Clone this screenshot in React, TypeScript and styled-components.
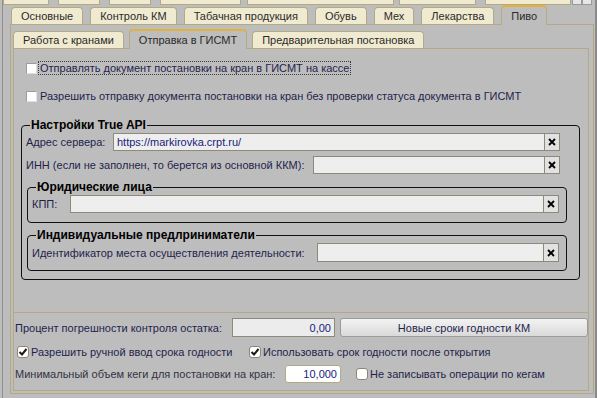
import React from "react";
import styled, { createGlobalStyle, css } from "styled-components";

const C = {
  bg: "#bdbdbd",
  cream: "#f0ead0",
  tan: "#b3aa84",
  accent: "#e3b23c",
  text: "#1f1f4c",
  value: "#1a1a7a",
  field: "#eeeeee",
  fieldBorder: "#8d897b",
};

const Global = createGlobalStyle`
  html, body { margin: 0; padding: 0; background: ${C.bg}; }
  body {
    font-family: "Liberation Sans", Arial, sans-serif;
    font-size: 11px;
    color: ${C.text};
  }
  * { box-sizing: border-box; }
`;

const Window = styled.div`
  width: 597px;
  height: 398px;
  overflow: hidden;
  background: ${C.bg};
  padding-left: 2px;
`;

const Frame = styled.div`
  height: 100%;
  border-left: 1px solid #8e8e8e;
  border-right: 2px solid #8a8a8a;
  display: flex;
  flex-direction: column;
`;

const StubStrip = styled.div`
  display: flex;
  height: 5px;
  flex-shrink: 0;
`;

const Stub = styled.div<{ $w: number; $gap: number; $light?: boolean }>`
  width: ${(p) => p.$w}px;
  margin-left: ${(p) => p.$gap}px;
  background: ${(p) => (p.$light ? "#e6e6e6" : C.cream)};
  border: 1px solid ${(p) => (p.$light ? "#9a9a9a" : C.tan)};
  border-top: none;
`;

const TabRow = styled.div<{ $indent: number; $gap: number }>`
  display: flex;
  align-items: flex-end;
  gap: ${(p) => p.$gap}px;
  height: 19px;
  flex-shrink: 0;
  margin-left: ${(p) => p.$indent}px;
`;

const Tab = styled.div<{ $active?: boolean }>`
  height: 17px;
  padding: 0 9px;
  display: flex;
  align-items: center;
  white-space: nowrap;
  color: #2a2a2a;
  background: ${C.cream};
  border: 1px solid ${C.tan};
  border-bottom: none;
  border-radius: 4px 4px 0 0;
  ${(p) =>
    p.$active &&
    css`
      height: 20px;
      margin-bottom: -1px;
      position: relative;
      z-index: 1;
      background: ${C.bg};
      border-top: 2px solid ${C.accent};
      padding-bottom: 1px;
    `}
`;

const OuterPanel = styled.div`
  margin-left: 7px;
  width: 584px;
  height: 370px;
  border: 1px solid ${C.tan};
  padding: 4px 4px 2px 2px;
  display: flex;
  flex-direction: column;
`;

const InnerFrame = styled.div`
  flex: 1;
  border: 1px solid ${C.tan};
  border-top: none;
  display: flex;
  flex-direction: column;
`;

const InnerPanel = styled.div`
  height: 265px;
  border-top: 1px solid ${C.tan};
  border-bottom: 1px solid ${C.tan};
  padding: 11px 8px 0 7px;
  display: flex;
  flex-direction: column;
`;

const CheckRow = styled.div<{ $mt?: number }>`
  display: flex;
  align-items: center;
  height: 16px;
  padding-left: 5px;
  margin-top: ${(p) => p.$mt ?? 0}px;
`;

const SquareBox = styled.div`
  width: 11px;
  height: 11px;
  background: #ffffff;
  border: 1px solid #9c9c9c;
  border-right-color: #e0e0e0;
  border-bottom-color: #e0e0e0;
  flex-shrink: 0;
  margin-right: 1px;
`;

const CheckText = styled.span<{ $focus?: boolean }>`
  white-space: nowrap;
  padding: 0 1px;
  line-height: 12px;
  border: 1px solid transparent;
  ${(p) =>
    p.$focus &&
    css`
      border: 1px dotted #3a3a3a;
    `}
`;

const Group = styled.fieldset<{ $mt: number; $ml?: number; $pr: number; $pb: number }>`
  margin: ${(p) => p.$mt}px 0 0 ${(p) => p.$ml ?? 0}px;
  padding: 1px ${(p) => p.$pr}px ${(p) => p.$pb}px 4px;
  border: 1px solid #111111;
  border-radius: 4px;
  min-width: 0;
  display: flex;
  flex-direction: column;
  gap: 5px;
`;

const Legend = styled.legend`
  font-weight: bold;
  font-size: 12px;
  line-height: 14px;
  color: #000;
  padding: 0 1px;
  margin-left: 4px;
`;

const Row = styled.div<{ $pr?: number; $h?: number }>`
  display: flex;
  align-items: center;
  height: ${(p) => p.$h ?? 18}px;
  padding-right: ${(p) => p.$pr ?? 0}px;
`;

const Label = styled.span<{ $w?: number }>`
  flex: 0 0 ${(p) => (p.$w ? `${p.$w}px` : "auto")};
  white-space: nowrap;
  overflow: hidden;
`;

const DimLabel = styled(Label)`
  color: #333344;
`;

const Field = styled.div`
  flex: 1;
  display: flex;
  height: 100%;
  min-width: 0;
`;

const FieldBox = styled.div`
  flex: 1;
  background: ${C.field};
  border: 1px solid ${C.fieldBorder};
  padding: 0 3px;
  display: flex;
  align-items: center;
  color: ${C.value};
  white-space: nowrap;
`;

const ClearBtn = styled.div`
  width: 15px;
  flex-shrink: 0;
  background: #e2e2e2;
  border: 1px solid ${C.fieldBorder};
  border-left: none;
  display: flex;
  align-items: center;
  justify-content: center;
`;

const BottomArea = styled.div`
  padding: 5px 0 0 1px;
  display: flex;
  flex-direction: column;
`;

const BottomRow = styled(Row)<{ $mt: number; $pl?: number }>`
  margin-top: ${(p) => p.$mt}px;
  padding-left: ${(p) => p.$pl ?? 0}px;
`;

const NumBox = styled.div<{ $w: number; $white?: boolean }>`
  flex: 0 0 ${(p) => p.$w}px;
  height: 100%;
  display: flex;
  align-items: center;
  justify-content: flex-end;
  padding-right: 3px;
  color: ${C.value};
  background: ${(p) => (p.$white ? "#ffffff" : "#ececec")};
  border: 1px solid ${(p) => (p.$white ? "#b3ab86" : C.fieldBorder)};
  border-radius: ${(p) => (p.$white ? 3 : 0)}px;
`;

const Button = styled.div`
  flex: 1;
  height: 100%;
  margin-left: 5px;
  display: flex;
  align-items: center;
  justify-content: center;
  color: ${C.text};
  background: linear-gradient(#f3f3f3, #d9d9d9);
  border: 1px solid #9b9b9b;
  border-radius: 3px;
`;

const CheckItem = styled.div<{ $w?: number; $ml?: number }>`
  display: flex;
  align-items: center;
  gap: 2px;
  flex: 0 0 ${(p) => (p.$w ? `${p.$w}px` : "auto")};
  margin-left: ${(p) => p.$ml ?? 0}px;
  white-space: nowrap;
`;

const RoundBox = styled.div`
  width: 12px;
  height: 12px;
  flex-shrink: 0;
  background: #ffffff;
  border: 1px solid #8b8676;
  border-radius: 3px;
  display: flex;
  align-items: center;
  justify-content: center;
`;

const ClearIcon = () => (
  <svg width="8" height="8" viewBox="0 0 8 8">
    <path d="M1 1 L7 7 M7 1 L1 7" stroke="#000" strokeWidth="1.8" />
  </svg>
);

const Tick = () => (
  <svg width="10" height="10" viewBox="0 0 10 10">
    <path d="M1.5 5 L4 7.5 L8.5 2" fill="none" stroke="#1a1a1a" strokeWidth="2" />
  </svg>
);

const stubs = [
  { w: 46, gap: 0 },
  { w: 42, gap: 9 },
  { w: 42, gap: 9 },
  { w: 81, gap: 9 },
  { w: 147, gap: 6 },
  { w: 77, gap: 5 },
  { w: 86, gap: 9 },
];

const mainTabs = ["Основные", "Контроль КМ", "Табачная продукция", "Обувь", "Мех", "Лекарства", "Пиво"];
const innerTabs = ["Работа с кранами", "Отправка в ГИСМТ", "Предварительная постановка"];

const TextField = ({ value }: { value?: string }) => (
  <Field>
    <FieldBox>{value}</FieldBox>
    <ClearBtn>
      <ClearIcon />
    </ClearBtn>
  </Field>
);

export default function App() {
  return (
    <>
      <Global />
      <Window>
        <Frame>
          <StubStrip>
            {stubs.map((s, i) => (
              <Stub key={i} $w={s.w} $gap={s.gap} />
            ))}
            <Stub $w={10} $gap={1} $light />
            <Stub $w={10} $gap={0} $light />
          </StubStrip>
          <TabRow $indent={8} $gap={7}>
            {mainTabs.map((t) => (
              <Tab key={t} $active={t === "Пиво"}>
                {t}
              </Tab>
            ))}
          </TabRow>
          <OuterPanel>
            <TabRow $indent={0} $gap={5}>
              {innerTabs.map((t) => (
                <Tab key={t} $active={t === "Отправка в ГИСМТ"}>
                  {t}
                </Tab>
              ))}
            </TabRow>
            <InnerFrame>
              <InnerPanel>
                <CheckRow>
                  <SquareBox />
                  <CheckText $focus>Отправлять документ постановки на кран в ГИСМТ на кассе</CheckText>
                </CheckRow>
                <CheckRow $mt={12}>
                  <SquareBox />
                  <CheckText>
                    Разрешить отправку документа постановки на кран без проверки статуса документа в ГИСМТ
                  </CheckText>
                </CheckRow>
                <Group $mt={14} $pr={12} $pb={8}>
                  <Legend>Настройки True API</Legend>
                  <Row $pr={7}>
                    <Label $w={87}>Адрес сервера:</Label>
                    <TextField value="https://markirovka.crpt.ru/" />
                  </Row>
                  <Row $pr={7}>
                    <Label $w={287}>ИНН (если не заполнен, то берется из основной ККМ):</Label>
                    <TextField />
                  </Row>
                  <Group $mt={1} $ml={1} $pr={7} $pb={9}>
                    <Legend>Юридические лица</Legend>
                    <Row>
                      <Label $w={38}>КПП:</Label>
                      <TextField />
                    </Row>
                  </Group>
                  <Group $mt={0} $ml={1} $pr={7} $pb={8}>
                    <Legend>Индивидуальные предлриниматели</Legend>
                    <Row $h={19}>
                      <Label $w={285}>Идентификатор места осуществления деятельности:</Label>
                      <TextField />
                    </Row>
                  </Group>
                </Group>
              </InnerPanel>
              <BottomArea>
                <BottomRow $h={19} $mt={0}>
                  <Label $w={217}>Процент погрешности контроля остатка:</Label>
                  <NumBox $w={103}>0,00</NumBox>
                  <Button>Новые сроки годности КМ</Button>
                </BottomRow>
                <BottomRow $h={14} $mt={8} $pl={2}>
                  <CheckItem $w={232}>
                    <RoundBox>
                      <Tick />
                    </RoundBox>
                    <span>Разрешить ручной ввод срока годности</span>
                  </CheckItem>
                  <CheckItem>
                    <RoundBox>
                      <Tick />
                    </RoundBox>
                    <span>Использовать срок годности после открытия</span>
                  </CheckItem>
                </BottomRow>
                <BottomRow $mt={6}>
                  <DimLabel $w={270}>Минимальный объем кеги для постановки на кран:</DimLabel>
                  <NumBox $w={56} $white>
                    10,000
                  </NumBox>
                  <CheckItem $ml={15}>
                    <RoundBox />
                    <span>Не записывать операции по кегам</span>
                  </CheckItem>
                </BottomRow>
              </BottomArea>
            </InnerFrame>
          </OuterPanel>
        </Frame>
      </Window>
    </>
  );
}
